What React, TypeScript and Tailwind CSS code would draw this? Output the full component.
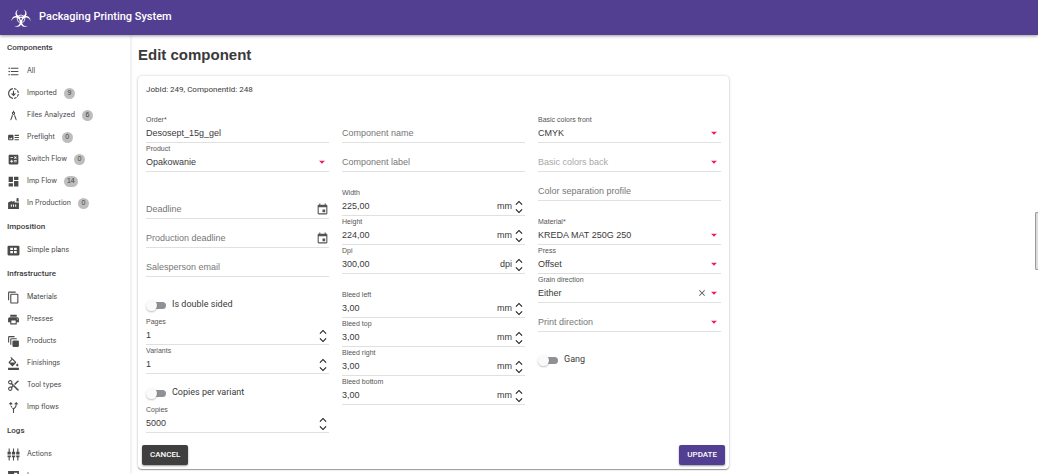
import type { ReactNode } from "react";
import {
    MdAltRoute,
    MdArchitecture,
    MdArrowDropDown,
    MdArtTrack,
    MdAutoAwesomeMotion,
    MdCalculate,
    MdClose,
    MdContentCopy,
    MdContentCut,
    MdDashboard,
    MdDownloading,
    MdEvent,
    MdFactory,
    MdFormatColorFill,
    MdFormatListBulleted,
    MdKeyboardArrowDown,
    MdKeyboardArrowUp,
    MdPrint,
} from "react-icons/md";

function BiohazardIcon() {
    // tapered crescent, open at the top, repeated three times round the centre
    const crescent = "M9 1.6C5.6 3.2 5 6 5.4 7.9C6 11 9 12.6 12 12.6S18 11 18.6 7.9C19 6 18.4 3.2 15 1.6C17.2 3.6 17.4 5.4 17 7C16.3 9.5 14.2 10.6 12 10.6S7.7 9.5 7 7C6.6 5.4 6.8 3.6 9 1.6z";
    return (
        <svg viewBox="0 0 24 24" className="size-[20px]" fill="currentColor">
            <path d={crescent} />
            <path d={crescent} transform="rotate(120 12 13)" />
            <path d={crescent} transform="rotate(240 12 13)" />
            <circle cx="12" cy="13" r="4.6" fill="none" stroke="currentColor" />
            <circle cx="12" cy="13" r="1.2" fill="#533f91" />
        </svg>
    );
}

function PlansIcon() {
    return (
        <svg viewBox="0 0 24 24" fill="currentColor">
            <path
                fillRule="evenodd"
                d="M3 3h18a2 2 0 0 1 2 2v14a2 2 0 0 1-2 2H3a2 2 0 0 1-2-2V5a2 2 0 0 1 2-2zm3 4v4h5V7zm7 0v4h5V7zm-7 6v4h5v-4zm7 0v4h5v-4z"
            />
        </svg>
    );
}

function SlidersIcon() {
    return (
        <svg viewBox="0 0 24 24" fill="currentColor">
            <path d="M3 1h2v6h2v5H1V7h2zM1 14h6v3H5v6H3v-6H1zM11 1h2v6h2v5H9V7h2zM9 14h6v3h-2v6h-2v-6H9zM19 1h2v6h2v5h-6V7h2zM17 14h6v3h-2v6h-2v-6h-2z" />
        </svg>
    );
}

function LogsIcon() {
    return (
        <svg viewBox="0 0 24 24" fill="currentColor">
            <path fillRule="evenodd" d="M2 2h20v20H2zm11 3v6h6V5z" />
        </svg>
    );
}

type Item = { name: string; icon: ReactNode; count?: number };

const sections: { title: string; items: Item[] }[] = [
    {
        title: "Components",
        items: [
            { name: "All", icon: <MdFormatListBulleted /> },
            { name: "Imported", icon: <MdDownloading />, count: 9 },
            { name: "Files Analyzed", icon: <MdArchitecture />, count: 6 },
            { name: "Preflight", icon: <MdArtTrack />, count: 0 },
            { name: "Switch Flow", icon: <MdCalculate />, count: 0 },
            { name: "Imp Flow", icon: <MdDashboard />, count: 14 },
            { name: "In Production", icon: <MdFactory />, count: 0 },
        ],
    },
    {
        title: "Imposition",
        items: [{ name: "Simple plans", icon: <PlansIcon /> }],
    },
    {
        title: "Infrastructure",
        items: [
            { name: "Materials", icon: <MdContentCopy /> },
            { name: "Presses", icon: <MdPrint /> },
            { name: "Products", icon: <MdAutoAwesomeMotion /> },
            { name: "Finishings", icon: <MdFormatColorFill /> },
            { name: "Tool types", icon: <MdContentCut /> },
            { name: "Imp flows", icon: <MdAltRoute /> },
        ],
    },
    {
        title: "Logs",
        items: [
            { name: "Actions", icon: <SlidersIcon /> },
            { name: "Logs", icon: <LogsIcon /> },
        ],
    },
];

function Sidebar() {
    return (
        <nav className="w-[130px] shrink-0 overflow-hidden shadow-[0_0_4px_rgba(0,0,0,0.15)]">
            {sections.map((section) => (
                <div key={section.title}>
                    <h2 className="flex h-[25px] items-center pl-[7px] font-[Roboto] text-[8px] font-medium text-[#3a3a3a]">
                        {section.title}
                    </h2>
                    {section.items.map((item) => (
                        <a
                            key={item.name}
                            href="#"
                            className="flex h-[22px] items-center gap-[7px] pl-[7px] text-[7px] text-[#444]"
                        >
                            <span className="text-[13px] text-[#4a4a4a] [&>svg]:size-[13px]">{item.icon}</span>
                            <span className="font-[Inter]">{item.name}</span>
                            {item.count !== undefined && (
                                <span className="flex h-[11px] min-w-[11px] items-center justify-center rounded-full bg-[#bdbdbd] px-[3px]">
                                    {item.count}
                                </span>
                            )}
                        </a>
                    ))}
                </div>
            ))}
        </nav>
    );
}

type FieldProps = {
    id: string;
    label: string;
    value?: string;
    children?: ReactNode;
};

// Shared frame: small label on top, control and adornments above the line
function Frame({ id, label, showLabel, children }: { id: string; label: string; showLabel: boolean; children: ReactNode }) {
    return (
        <div className="flex h-[29px] flex-col justify-end border-b border-[#e0e0e0]">
            {showLabel && (
                <label htmlFor={id} className="h-[11px] text-[7px] leading-[9px] text-[#555]">
                    {label}
                </label>
            )}
            <div className="flex h-[16px] items-center">{children}</div>
        </div>
    );
}

function TextField({ id, label, value, children }: FieldProps) {
    return (
        <Frame id={id} label={label} showLabel={!!value}>
            <input
                id={id}
                type="text"
                defaultValue={value}
                aria-label={label}
                placeholder={value ? undefined : label}
                className="min-w-0 flex-1 outline-none placeholder:text-[#777]"
            />
            {children}
        </Frame>
    );
}

function NumberField({ unit, ...props }: FieldProps & { unit?: string }) {
    return (
        <TextField {...props}>
            {unit && <span>{unit}</span>}
            <span className="flex w-[13px] flex-col items-center text-[#222]">
                <button type="button" aria-label={`Increase ${props.label}`}>
                    <MdKeyboardArrowUp className="-my-[3px] size-[14px]" />
                </button>
                <button type="button" aria-label={`Decrease ${props.label}`}>
                    <MdKeyboardArrowDown className="-my-[3px] size-[14px]" />
                </button>
            </span>
        </TextField>
    );
}

function DateField(props: FieldProps) {
    return (
        <TextField {...props}>
            <button type="button" aria-label={`Pick ${props.label}`}>
                <MdEvent className="mb-[2px] size-[13px] text-[#555]" />
            </button>
        </TextField>
    );
}

function SelectField({ id, label, value, disabled, clearable }: FieldProps & { disabled?: boolean; clearable?: boolean }) {
    let color = value ? "text-[#3a3a3a]" : "text-[#777]";
    if (disabled) color = "text-[#a8a8a8]";

    return (
        <Frame id={id} label={label} showLabel={!!value}>
            <select
                id={id}
                aria-label={label}
                disabled={disabled}
                className={`min-w-0 flex-1 appearance-none opacity-100 outline-none ${color}`}
            >
                <option>{value ?? label}</option>
            </select>
            {clearable && (
                <button type="button" aria-label={`Clear ${label}`}>
                    <MdClose className="mb-[2px] size-[10px] text-[#555]" />
                </button>
            )}
            <MdArrowDropDown className="mb-[2px] size-[14px] text-[#e91e63]" />
        </Frame>
    );
}

function Toggle({ label }: { label: string }) {
    return (
        <label className="flex h-[22px] items-center gap-[6px] font-[Roboto]">
            <input
                type="checkbox"
                className="relative h-[11px] w-[20px] appearance-none before:absolute before:top-[2px] before:right-0 before:h-[7px] before:w-[16px] before:rounded-full before:bg-[#8f9195] after:absolute after:top-0 after:left-0 after:size-[11px] after:rounded-full after:bg-[#fafafa] after:shadow-[0_1px_2px_rgba(0,0,0,0.25)]"
            />
            {label}
        </label>
    );
}

export default function App() {
    return (
        <div className="flex h-screen flex-col overflow-hidden bg-white font-['Liberation_Sans',sans-serif] text-[9px] text-[#3a3a3a]">
            <header className="z-10 flex h-[35px] shrink-0 items-center gap-2 bg-[#533f91] pl-[11px] text-white shadow-[0_1px_3px_rgba(0,0,0,0.4)]">
                <BiohazardIcon />
                <span className="font-[Roboto] text-[11px] font-medium">Packaging Printing System</span>
            </header>

            <div className="flex min-h-0 flex-1">
                <Sidebar />

                <main className="min-w-0 flex-1 overflow-hidden pt-[9px] pl-2">
                    <h1 className="text-[15px] leading-[22px] font-bold text-[#3a3a3a]">Edit component</h1>

                    <form className="mt-[10px] max-w-[591px] rounded-sm px-1 pt-2 pb-1 shadow-[0_0_3px_rgba(0,0,0,0.2),0_1px_1px_rgba(0,0,0,0.35)]">
                        <p className="px-1 font-[Roboto] text-[8px] leading-[12px]">JobId: 249, ComponentId: 248</p>

                        <div className="mt-[18px] grid grid-cols-3 gap-[13px] px-1">
                            <div>
                                <TextField id="order" label="Order*" value="Desosept_15g_gel" />
                                <SelectField id="product" label="Product" value="Opakowanie" />
                                <div className="mt-[18px]">
                                    <DateField id="deadline" label="Deadline" />
                                    <DateField id="production-deadline" label="Production deadline" />
                                    <TextField id="email" label="Salesperson email" />
                                </div>
                                <div className="mt-[17px]">
                                    <Toggle label="Is double sided" />
                                    <NumberField id="pages" label="Pages" value="1" />
                                    <NumberField id="variants" label="Variants" value="1" />
                                </div>
                                <div className="mt-2">
                                    <Toggle label="Copies per variant" />
                                    <NumberField id="copies" label="Copies" value="5000" />
                                </div>
                            </div>

                            <div>
                                <TextField id="name" label="Component name" />
                                <TextField id="label" label="Component label" />
                                <div className="mt-[15px]">
                                    <NumberField id="width" label="Width" value="225,00" unit="mm" />
                                    <NumberField id="height" label="Height" value="224,00" unit="mm" />
                                    <NumberField id="dpi" label="Dpi" value="300,00" unit="dpi" />
                                </div>
                                <div className="mt-[15px]">
                                    <NumberField id="bleed-left" label="Bleed left" value="3,00" unit="mm" />
                                    <NumberField id="bleed-top" label="Bleed top" value="3,00" unit="mm" />
                                    <NumberField id="bleed-right" label="Bleed right" value="3,00" unit="mm" />
                                    <NumberField id="bleed-bottom" label="Bleed bottom" value="3,00" unit="mm" />
                                </div>
                            </div>

                            <div>
                                <SelectField id="colors-front" label="Basic colors front" value="CMYK" />
                                <SelectField id="colors-back" label="Basic colors back" disabled />
                                <TextField id="profile" label="Color separation profile" />
                                <div className="mt-[15px]">
                                    <SelectField id="material" label="Material*" value="KREDA MAT 250G 250" />
                                    <SelectField id="press" label="Press" value="Offset" />
                                    <SelectField id="grain" label="Grain direction" value="Either" clearable />
                                    <SelectField id="print" label="Print direction" />
                                </div>
                                <div className="mt-[17px]">
                                    <Toggle label="Gang" />
                                </div>
                            </div>
                        </div>

                        <div className="mt-3 flex justify-between font-[Roboto] text-[8px] font-medium text-white">
                            <button type="button" className="h-5 rounded-xs bg-[#3f3f3f] px-2 shadow-[0_1px_2px_rgba(0,0,0,0.4)]">
                                CANCEL
                            </button>
                            <button type="submit" className="h-5 rounded-xs bg-[#533f91] px-2 shadow-[0_1px_2px_rgba(0,0,0,0.4)]">
                                UPDATE
                            </button>
                        </div>
                    </form>
                </main>
            </div>

            {/* page scroll thumb */}
            <div className="absolute top-[212px] right-0 h-[58px] w-[3px] rounded-l-xs border border-r-0 border-[#999] bg-[#ddd]" />
        </div>
    );
}
